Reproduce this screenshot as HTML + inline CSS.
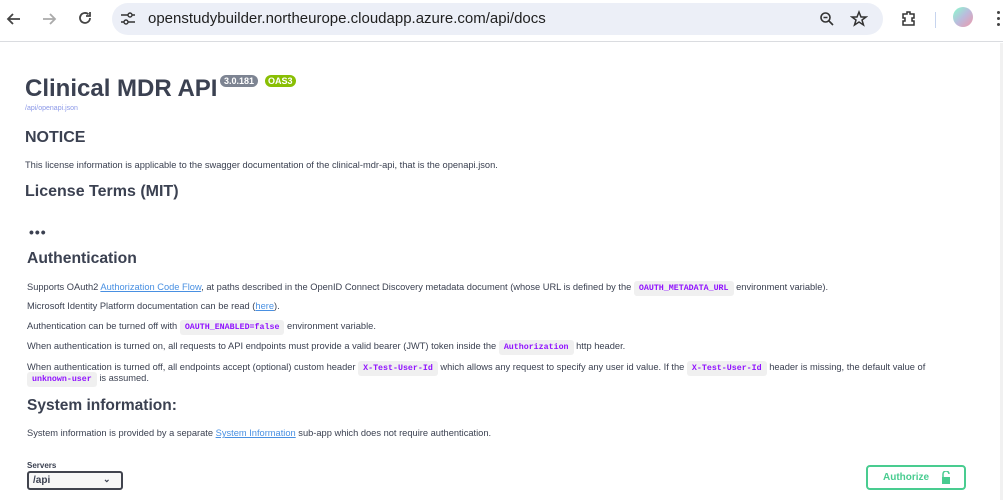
<!DOCTYPE html>
<html><head><meta charset="utf-8"><style>
*{margin:0;padding:0;box-sizing:border-box}
body{width:1003px;height:500px;overflow:hidden;background:#fff;font-family:"Liberation Sans",sans-serif;color:#3b4151;position:relative}
.bar{position:absolute;left:0;top:0;width:1003px;height:42px;background:#fff;border-bottom:1px solid #dadce0}
.url{position:absolute;left:112px;top:3px;width:771px;height:32px;border-radius:16px;background:#eceff7}
.url span{position:absolute;left:36px;top:7px;font-size:15px;color:#1f1f1f}
.abs{position:absolute}
p.t{position:absolute;font-size:9.3px;color:#3b4151;white-space:nowrap}
code{font-family:"Liberation Mono",monospace;font-size:8.3px;font-weight:bold;color:#9012fe;background:#f0f0f0;border-radius:3px;padding:3px 5px}
a{color:#4990e2;text-decoration:underline}
h{position:absolute;font-weight:bold;color:#3b4151;white-space:nowrap}
</style></head><body>
<div class="bar">
<svg class="abs" style="left:5px;top:10px" width="18" height="18" viewBox="0 0 18 18"><path d="M15 9H3M8 4L3 9l5 5" stroke="#444" stroke-width="1.8" fill="none"/></svg>
<svg class="abs" style="left:40px;top:10px" width="18" height="18" viewBox="0 0 18 18"><path d="M3 9h12M10 4l5 5-5 5" stroke="#aaa" stroke-width="1.8" fill="none"/></svg>
<svg class="abs" style="left:76px;top:9px" width="18" height="18" viewBox="0 0 18 18"><path d="M14 9a5 5 0 1 1-1.5-3.6M14 3v4h-4" stroke="#444" stroke-width="1.8" fill="none"/></svg>
<div class="url"><svg class="abs" style="left:8px;top:9px" width="16" height="14" viewBox="0 0 16 14"><path d="M1 3h7M12 3h3M1 10h3M8 10h7" stroke="#333" stroke-width="1.6"/><circle cx="10" cy="3" r="2" stroke="#333" stroke-width="1.4" fill="none"/><circle cx="6" cy="10" r="2" stroke="#333" stroke-width="1.4" fill="none"/></svg><span>openstudybuilder.northeurope.cloudapp.azure.com/api/docs</span>
<svg class="abs" style="left:707px;top:8px" width="16" height="16" viewBox="0 0 16 16"><circle cx="6.5" cy="6.5" r="4.5" stroke="#333" stroke-width="1.6" fill="none"/><path d="M4.5 6.5h4M10 10l4 4" stroke="#333" stroke-width="1.6"/></svg>
<svg class="abs" style="left:738px;top:7px" width="18" height="18" viewBox="0 0 18 18"><path d="M9 2l2 5h5l-4 3 1.5 5L9 12l-4.5 3L6 10 2 7h5z" stroke="#333" stroke-width="1.5" fill="none"/></svg></div>
<svg class="abs" style="left:900px;top:9px" width="18" height="18" viewBox="0 0 18 18"><path d="M3 5h4V3h3v2h4v4h-2v3h2v4H3v-4h2V9H3z" stroke="#333" stroke-width="1.5" fill="none"/></svg>
<div class="abs" style="left:935px;top:12px;width:1px;height:16px;background:#c6d4ee"></div>
<div class="abs" style="left:953px;top:7px;width:20px;height:20px;border-radius:50%;background:linear-gradient(135deg,#8fc,#bbd 50%,#e9a)"></div>
<div class="abs" style="left:997px;top:11px;width:3px;height:3px;background:#444;border-radius:50%;box-shadow:0 6px #444,0 12px #444"></div>
</div>
<h style="left:25px;top:75px;font-size:24px">Clinical MDR API</h>
<span class="abs" style="left:220px;top:75px;background:#7d8492;color:#fff;font-size:9px;font-weight:bold;padding:1px 4px;border-radius:6px">3.0.181</span>
<span class="abs" style="left:265px;top:75px;background:#89bf04;color:#fff;font-size:9px;font-weight:bold;padding:1px 3px;border-radius:6px">OAS3</span>
<p class="t" style="left:25px;top:105px;font-size:7px;color:#8c99e8">/api/openapi.json</p>
<h style="left:25px;top:129px;font-size:16px">NOTICE</h>
<p class="t" style="left:25px;top:160px">This license information is applicable to the swagger documentation of the clinical-mdr-api, that is the openapi.json.</p>
<h style="left:25px;top:183px;font-size:16px">License Terms (MIT)</h>
<h style="left:29px;top:224px;font-size:14px;letter-spacing:1px">•••</h>
<h style="left:27px;top:250px;font-size:15.7px">Authentication</h>
<p class="t" style="left:27px;top:282px">Supports OAuth2 <a>Authorization Code Flow</a>, at paths described in the OpenID Connect Discovery metadata document (whose URL is defined by the <code>OAUTH_METADATA_URL</code> environment variable).</p>
<p class="t" style="left:27px;top:301px">Microsoft Identity Platform documentation can be read (<a>here</a>).</p>
<p class="t" style="left:27px;top:321px">Authentication can be turned off with <code>OAUTH_ENABLED=false</code> environment variable.</p>
<p class="t" style="left:27px;top:341px">When authentication is turned on, all requests to API endpoints must provide a valid bearer (JWT) token inside the <code>Authorization</code> http header.</p>
<p class="t" style="left:27px;top:362px">When authentication is turned off, all endpoints accept (optional) custom header <code>X-Test-User-Id</code> which allows any request to specify any user id value. If the <code>X-Test-User-Id</code> header is missing, the default value of</p>
<p class="t" style="left:27px;top:373px"><code>unknown-user</code> is assumed.</p>
<h style="left:27px;top:397px;font-size:15.5px">System information:</h>
<p class="t" style="left:27px;top:428px">System information is provided by a separate <a>System Information</a> sub-app which does not require authentication.</p>
<p class="t" style="left:27px;top:461px;font-size:8px;font-weight:bold">Servers</p>
<div class="abs" style="left:27px;top:471px;width:96px;height:19px;border:2px solid #41444e;border-radius:3px;background:#f7f7f7;font-size:10px;font-weight:bold;padding:2px 4px">/api<span style="position:absolute;left:74px;top:1px;font-size:9px">⌄</span></div>
<div class="abs" style="left:866px;top:465px;width:100px;height:25px;border:2px solid #49cc90;border-radius:4px;color:#49cc90;font-size:10px;font-weight:bold;padding:5px 0 0 15px">Authorize
<svg class="abs" style="left:73px;top:4px" width="10" height="13" viewBox="0 0 10 13"><path d="M2 6V3a3 3 0 0 1 6 0" stroke="#49cc90" stroke-width="1.5" fill="none"/><rect x="1" y="6" width="8" height="7" fill="#49cc90"/></svg></div>
<div class="abs" style="left:1000px;top:43px;width:3px;height:457px;background:#f1f1f1"></div>
</body></html>
